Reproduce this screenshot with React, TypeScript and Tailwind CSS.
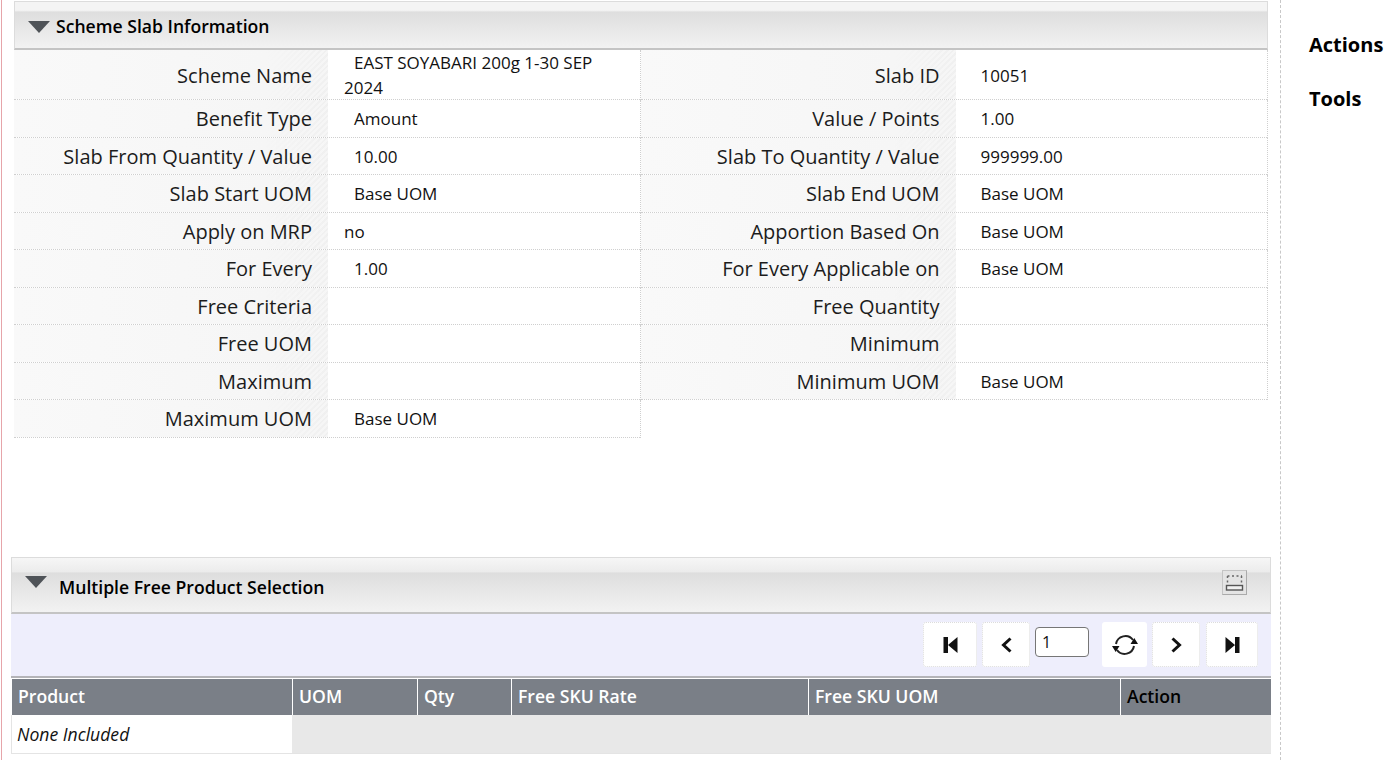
const FONT = "font-['Open_Sans','Noto_Sans',sans-serif]";

const rows = [
  [
    { label: "Scheme Name", value: "EAST SOYABARI 200g 1-30 SEP 2024", indent: true },
    { label: "Slab ID", value: "10051" },
  ],
  [
    { label: "Benefit Type", value: "Amount", indent: true },
    { label: "Value / Points", value: "1.00" },
  ],
  [
    { label: "Slab From Quantity / Value", value: "10.00", indent: true },
    { label: "Slab To Quantity / Value", value: "999999.00" },
  ],
  [
    { label: "Slab Start UOM", value: "Base UOM", indent: true },
    { label: "Slab End UOM", value: "Base UOM" },
  ],
  [
    { label: "Apply on MRP", value: "no" },
    { label: "Apportion Based On", value: "Base UOM" },
  ],
  [
    { label: "For Every", value: "1.00", indent: true },
    { label: "For Every Applicable on", value: "Base UOM" },
  ],
  [
    { label: "Free Criteria", value: "" },
    { label: "Free Quantity", value: "" },
  ],
  [
    { label: "Free UOM", value: "" },
    { label: "Minimum", value: "" },
  ],
  [
    { label: "Maximum", value: "" },
    { label: "Minimum UOM", value: "Base UOM" },
  ],
];

const columns = [
  { name: "Product", width: "w-[280px]" },
  { name: "UOM", width: "w-[124px]" },
  { name: "Qty", width: "w-[93px]" },
  { name: "Free SKU Rate", width: "w-[296px]" },
  { name: "Free SKU UOM", width: "w-[311px]" },
  { name: "Action", width: "flex-1", dark: true },
];

const Caret = () => (
  <svg width="22" height="12" viewBox="0 0 22 12" className="shrink-0">
    <path d="M0 0H22L11 12Z" fill="#4f5358" />
  </svg>
);

const Field = ({ label, value, indent, wide, first }: { label: string; value: string; indent?: boolean; wide?: boolean; first?: boolean }) => (
  <div className={`flex border-b border-dotted border-[#cfcfcf] ${first ? "h-[50px]" : "h-[37.5px]"}`}>
    <div className={`flex shrink-0 items-center justify-end bg-[linear-gradient(to_right,#f9f9f9_0%,#f6f6f6_80%,transparent_100%),repeating-linear-gradient(135deg,#f0f0f0_0,#f0f0f0_2px,#f6f6f6_2px,#f6f6f6_4px)] pr-4 pt-[2px] text-[20px] text-[#1c1c1c] ${wide ? "w-[315px]" : "w-[314px]"}`}>
      {label}
    </div>
    <div className={`flex min-w-0 flex-1 items-center ${wide ? "pl-[25px]" : "pl-4"} pr-6 pt-[1px] text-[17px] leading-[25px] text-[#111]`}>
      <div className={indent && !wide ? "indent-[10px]" : ""}>{value}</div>
    </div>
  </div>
);

const PagerButton = ({ width, children, margin, plain }: { width: string; children: React.ReactNode; margin?: string; plain?: boolean }) => (
  <div className={`flex h-[45px] items-center justify-center rounded-[3px] bg-white ${plain ? "" : "border border-dotted border-[#dcdcdc]"} ${width} ${margin ?? ""}`}>
    {children}
  </div>
);

export default function App() {
  return (
    <div className={`flex h-[760px] w-[1398px] overflow-hidden bg-white ${FONT}`}>
      <div className="h-full w-[1281px] shrink-0 border-r border-dashed border-[#c8c8c8]">
        <div className="h-full w-[1279px] border-l border-[#e6a5aa] pl-[9px] pt-px ml-px">
          {/* Scheme slab section */}
          <div className="ml-[3px] w-[1254px]">
            <div className="flex h-[49px] items-center gap-[6px] border border-b-[2px] border-[#dcdcdc] border-b-[#c4c4c4] bg-[linear-gradient(#f4f4f4_0,#f4f4f4_18%,#dedede_22%,#f2f2f2_100%)] pl-[13px] pt-[3px]">
              <Caret />
              <span className="text-[17.6px] font-semibold text-black">Scheme Slab Information</span>
            </div>
            {rows.map((row, i) => (
              <div key={row[0].label} className="grid grid-cols-2 border-r border-dotted border-[#cfcfcf]">
                <div className="border-r border-dotted border-[#cfcfcf]">
                  <Field {...row[0]} first={i === 0} />
                </div>
                <Field {...row[1]} first={i === 0} wide />
              </div>
            ))}
            <div className="w-[627px] border-r border-dotted border-[#cfcfcf]">
              <Field label="Maximum UOM" value="Base UOM" indent />
            </div>
          </div>

          {/* Free product section */}
          <div className="mt-[119px] w-[1260px]">
            <div className="relative flex h-[57px] items-center border border-b-[2px] border-[#dcdcdc] border-b-[#c4c4c4] bg-[linear-gradient(#f6f6f6_0,#ececec_25%,#dedede_28%,#f2f2f2_100%)] pl-[47px] pt-[5px]">
              <div className="absolute left-[13px] top-[18px]">
                <Caret />
              </div>
              <span className="text-[17.6px] font-semibold text-black">Multiple Free Product Selection</span>
              <div className="absolute right-[23px] top-[12px] flex h-[25px] w-[25px] items-center justify-center border border-[#c4c4c4] border-r-[#aaa] border-b-[#aaa] bg-[#e4e4e4]">
                <svg width="19" height="19" viewBox="0 0 19 19">
                  <path d="M2.5 3H17M2.5 3V11M16.5 3V11" stroke="#666" strokeWidth="1.5" strokeDasharray="2 2.5" fill="none" />
                  <rect x="1.5" y="12.5" width="16" height="4.5" fill="#f0f0f0" stroke="#555" strokeWidth="1.4" />
                </svg>
              </div>
            </div>
            <div className="flex h-[62px] items-center justify-end bg-[#eeeefc] pr-[13px]">
              <PagerButton width="w-[54px]">
                <svg width="15" height="18" viewBox="0 0 15 18"><path d="M0.5 1h4.5v16H0.5zM14.5 1v16L5 9z" fill="#111" /></svg>
              </PagerButton>
              <PagerButton width="w-[48px]" margin="ml-[5px]">
                <svg width="13" height="16" viewBox="0 0 13 16"><path d="M10.5 1.5 3.5 8l7 6.5" stroke="#111" strokeWidth="3" fill="none" /></svg>
              </PagerButton>
              <input
                readOnly
                value="1"
                className="mb-[6px] ml-[5px] h-[30px] w-[54px] rounded-[4px] border border-[#767676] bg-white px-[6px] text-[16px] text-[#111] outline-none"
              />
              <PagerButton width="w-[45px]" margin="ml-[13px]" plain>
                <svg width="28" height="26" viewBox="0 0 28 26" fill="none">
                  <path d="M5 12a9.5 9.5 0 0 1 17-4" stroke="#222" strokeWidth="2" />
                  <path d="M23 14a9.5 9.5 0 0 1-17 4" stroke="#222" strokeWidth="2" />
                  <path d="M19.5 12h7.5l-3.7-6zM1 14h7.5l-3.8 6z" fill="#111" />
                </svg>
              </PagerButton>
              <PagerButton width="w-[48px]" margin="ml-[5px]">
                <svg width="13" height="16" viewBox="0 0 13 16"><path d="M2.5 1.5 9.5 8l-7 6.5" stroke="#111" strokeWidth="3" fill="none" /></svg>
              </PagerButton>
              <PagerButton width="w-[52px]" margin="ml-[6px]">
                <svg width="15" height="18" viewBox="0 0 15 18"><path d="M10 1h4.5v16H10zM0.5 1v16L10 9z" fill="#111" /></svg>
              </PagerButton>
            </div>
            <div className="border-t-[2px] border-[#b4b4b8] pt-px">
              <div className="flex h-[36px] gap-px pl-px">
                {columns.map((c) => (
                  <div
                    key={c.name}
                    className={`flex items-center bg-[#7a7f87] pl-[6px] text-[17.6px] font-semibold ${c.width} ${c.dark ? "text-black" : "text-white"}`}
                  >
                    {c.name}
                  </div>
                ))}
              </div>
              <div className="flex h-[39px] border-b border-l border-[#e4e4e4] bg-[#e8e8e8]">
                <div className="flex w-[280px] items-center bg-white pl-[5px] pt-[2px] text-[17.6px] italic text-[#111]">None Included</div>
              </div>
            </div>
          </div>
        </div>
      </div>

      {/* Right rail */}
      <div className="flex flex-col gap-[25px] pl-[28px] pt-[30px] text-[20px] leading-[29px] font-bold text-black">
        <div>Actions</div>
        <div>Tools</div>
      </div>
    </div>
  );
}
